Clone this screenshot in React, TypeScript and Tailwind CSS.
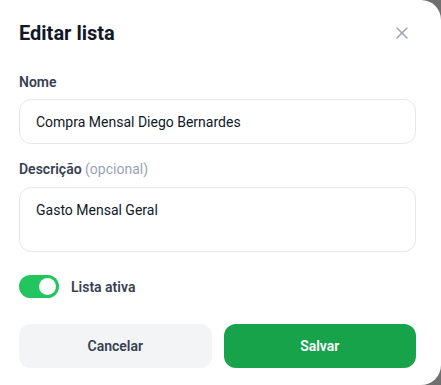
import React, { useState } from 'react';
import { X } from 'lucide-react';

export default function App() {
  const [name, setName] = useState('Compra Mensal Diego Bernardes');
  const [desc, setDesc] = useState('Gasto Mensal Geral');
  const [active, setActive] = useState(true);

  return (
    <div
      className="min-h-screen bg-[#6f6f6f]"
      style={{ fontFamily: '"Segoe UI", Roboto, sans-serif' }}
    >
      <div className="h-[385px] w-[441px] rounded-r-[20px] bg-white pb-5 pl-[19px] pr-[25px] pt-[19px]">
        <div className="flex h-7 items-center justify-between">
          <h2 className="text-[20px] font-bold leading-7 text-[#111827]">Editar lista</h2>
          <button type="button" className="mr-[4px] text-[#9ca3af]" title="Fechar">
            <X size={20} strokeWidth={1.75} />
          </button>
        </div>

        <label className="mt-[25px] block text-sm font-semibold leading-5 text-[#374151]">Nome</label>
        <input
          type="text"
          value={name}
          onChange={(e) => setName(e.target.value)}
          className="mt-[7px] h-[45px] w-full rounded-xl border border-[#e5e7eb] px-4 text-sm text-[#111827] focus:outline-none"
        />

        <label className="mt-[15px] block text-sm font-semibold leading-5 text-[#374151]">
          Descrição <span className="font-normal text-[#9ca3af]">(opcional)</span>
        </label>
        <textarea
          value={desc}
          onChange={(e) => setDesc(e.target.value)}
          className="mt-2 block h-[65px] w-full resize-none rounded-xl border border-[#e5e7eb] px-4 py-3 text-sm leading-5 text-[#111827] focus:outline-none"
        />

        <div className="mt-[23px] flex items-center gap-3">
          <button
            type="button"
            onClick={() => setActive(!active)}
            className={`flex h-[23px] w-10 items-center rounded-full px-[3px] transition-colors ${
              active ? 'justify-end bg-[#22c55e]' : 'justify-start bg-[#d1d5db]'
            }`}
          >
            <span className="h-[17px] w-[17px] rounded-full bg-white" />
          </button>
          <span className="text-sm font-semibold text-[#374151]">Lista ativa</span>
        </div>

        <div className="mt-[26px] grid grid-cols-2 gap-3">
          <button
            type="button"
            className="h-11 rounded-xl bg-[#f3f4f6] text-sm font-semibold text-[#374151]"
          >
            Cancelar
          </button>
          <button
            type="button"
            className="h-11 rounded-xl bg-[#16a34a] text-sm font-semibold text-white"
          >
            Salvar
          </button>
        </div>
      </div>
    </div>
  );
}
